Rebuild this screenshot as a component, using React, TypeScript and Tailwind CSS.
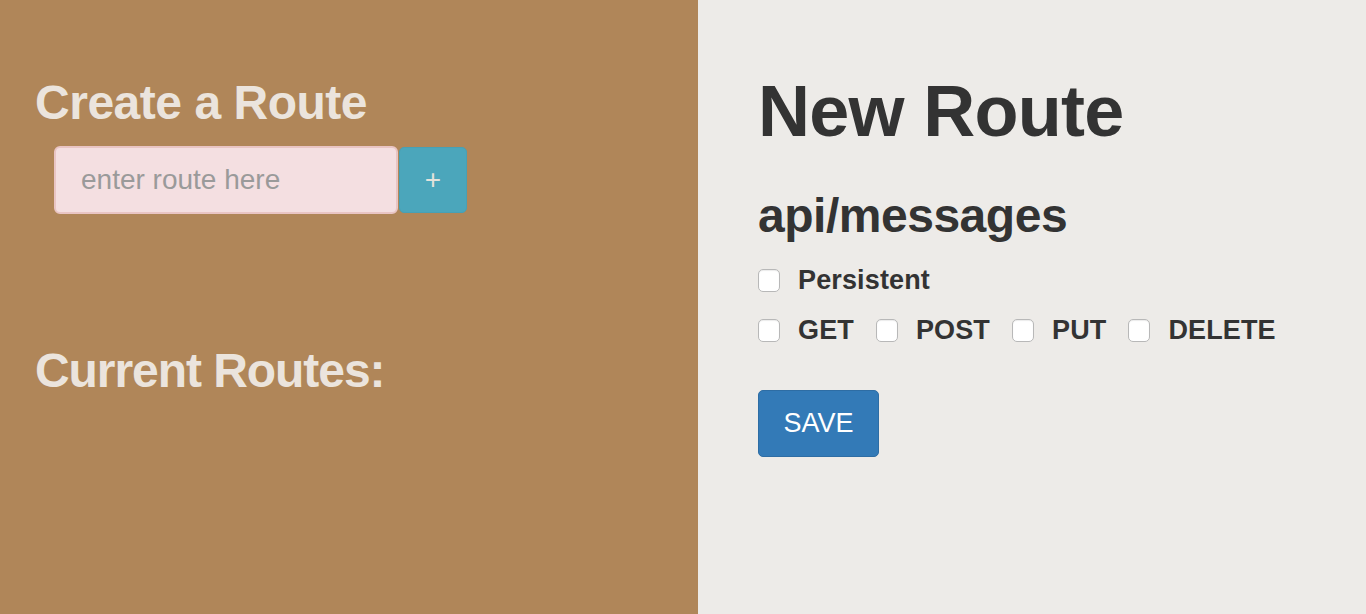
import React from "react";

function Check({ label, last }: { label: string; last?: boolean }) {
  return (
    <label className={`flex items-center ${last ? "" : "mr-[22px]"}`}>
      <span className="w-[22px] h-[23px] rounded-[5px] border border-[#b8b8b8] bg-white shadow-[inset_0_1px_1px_rgba(0,0,0,0.08)]" />
      <span className="ml-[18px] text-[27px] leading-[30px] font-bold tracking-[0.005em] text-[#333]">{label}</span>
    </label>
  );
}

export default function App() {
  return (
    <div className="flex w-full h-[614px] overflow-hidden" style={{ fontFamily: '"Liberation Sans", Arial, sans-serif' }}>
      <div className="w-[698px] shrink-0 bg-[#b08659] pl-[35px] pt-[79px]">
        <h2 className="text-[48px] leading-[48px] font-bold tracking-[-0.01em] text-[#ebe4dd]">Create a Route</h2>
        <div className="mt-[19px] ml-[19px] flex items-center">
          <input
            placeholder="enter route here"
            className="w-[344px] h-[68px] rounded-[6px] border-2 border-[#e9c5c4] bg-[#f4dfe1] pl-[25px] text-[28px] text-[#555] placeholder:text-[#9a9a9a] outline-none"
          />
          <button className="ml-[1px] w-[68px] h-[66px] rounded-[5px] bg-[#4ba6bb] border border-[#48a0b4] text-[#e3e3dc] text-[28px] leading-none flex items-center justify-center">
            +
          </button>
        </div>
        <h2 className="mt-[133px] text-[48px] leading-[48px] font-bold tracking-[-0.022em] text-[#ebe4dd]">Current Routes:</h2>
      </div>
      <div className="flex-1 bg-[#edebe8] pl-[60px] pt-[75px] text-[#333]">
        <h1 className="text-[72px] leading-[72px] font-bold tracking-[-0.01em]">New Route</h1>
        <h3 className="mt-[45px] text-[48px] leading-[48px] font-bold tracking-[-0.01em]">api/messages</h3>
        <div className="mt-[25px] flex">
          <Check label="Persistent" last />
        </div>
        <div className="mt-[20px] flex">
          <Check label="GET" />
          <Check label="POST" />
          <Check label="PUT" />
          <Check label="DELETE" last />
        </div>
        <button className="mt-[45px] w-[121px] h-[67px] rounded-[5px] bg-[#337ab7] border border-[#2e6da4] text-white text-[27px] leading-none">
          SAVE
        </button>
      </div>
    </div>
  );
}
